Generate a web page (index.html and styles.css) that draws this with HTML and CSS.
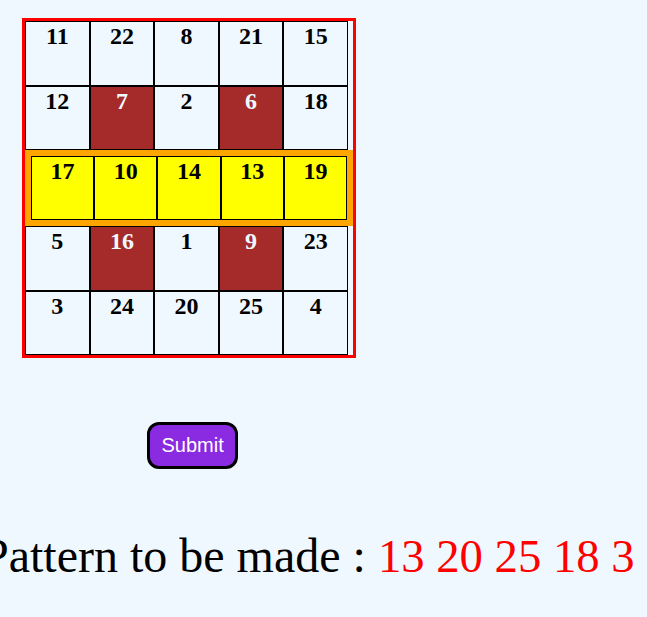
FILE: index.html
```html
<!DOCTYPE html>
<html>
<head>
<meta charset="utf-8">
<link rel="stylesheet" href="styles.css">
</head>
<body>
<div class="board">
  <div class="row">
    <div class="cell">11</div><div class="cell">22</div><div class="cell">8</div><div class="cell">21</div><div class="cell">15</div>
  </div>
  <div class="row">
    <div class="cell">12</div><div class="cell dark">7</div><div class="cell">2</div><div class="cell dark">6</div><div class="cell">18</div>
  </div>
  <div class="row selected">
    <div class="cell">17</div><div class="cell">10</div><div class="cell">14</div><div class="cell">13</div><div class="cell">19</div>
  </div>
  <div class="row">
    <div class="cell">5</div><div class="cell dark">16</div><div class="cell">1</div><div class="cell dark">9</div><div class="cell">23</div>
  </div>
  <div class="row">
    <div class="cell">3</div><div class="cell">24</div><div class="cell">20</div><div class="cell">25</div><div class="cell">4</div>
  </div>
</div>
<div class="actions">
  <button class="submit">Submit</button>
</div>
<div class="pattern">Pattern to be made : <span class="nums">13 20 25 18 3</span></div>
</body>
</html>
```

FILE: styles.css
```css
html, body {
  margin: 0;
  padding: 0;
  background: #f0f8ff;
}
body {
  font-family: "Liberation Serif", "Times New Roman", serif;
  overflow: hidden;
}
.board {
  margin: 18px 0 0 22px;
  width: 328px;
  border: 3px solid #ff0000;
  display: flex;
  flex-direction: column;
}
.row {
  display: flex;
}
.cell {
  box-sizing: border-box;
  width: 64.6px;
  height: 64.5px;
  border: 1px solid #000;
  background: #f0f8ff;
  color: #000;
  font-weight: bold;
  font-size: 24px;
  text-align: center;
  padding-top: 1px;
}
.cell.dark {
  background: #a52a2a;
  color: #f0f8ff;
}
.row.selected {
  background: #ffa500;
  padding: 6px 6px 6px 6px;
}
.row.selected .cell {
  flex: 1;
  width: auto;
  height: 64px;
  background: #ffff00;
}
.actions {
  margin: 64px 0 0 147px;
}
.submit {
  font-family: "Liberation Sans", Arial, sans-serif;
  font-size: 20px;
  color: #ffffff;
  background: #8a2be2;
  border: 3px solid #000;
  border-radius: 12px;
  padding: 9px 11.5px;
  line-height: normal;
}
.pattern {
  margin: 59px 0 0 -18px;
  white-space: nowrap;
  font-size: 48px;
  color: #000;
}
.pattern .nums {
  color: #ff0000;
  font-size: 46.7px;
}
```
